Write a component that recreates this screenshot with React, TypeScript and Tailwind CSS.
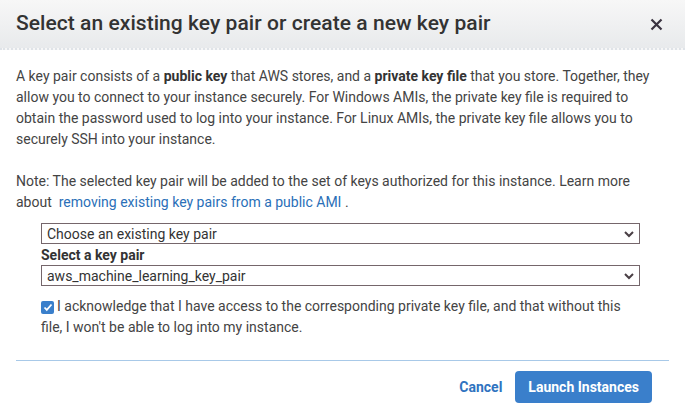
import React from "react";

const Chevron = () => (
  <svg width="12" height="8" viewBox="0 0 12 8" className="shrink-0">
    <path d="M2 2l4 4 4-4" fill="none" stroke="#4a3f45" strokeWidth="2" />
  </svg>
);

const Select = ({ value }: { value: string }) => (
  <div className="flex h-[21px] items-center justify-between border border-[#75666b] bg-white pl-[5px] pr-[4px] text-[14px] leading-none text-[#333]">
    <span>{value}</span>
    <Chevron />
  </div>
);

const App = () => {
  return (
    <div className="h-[415px] w-[685px] bg-white font-['Roboto',sans-serif] text-[#444]">
      {/* header */}
      <div className="flex h-[50px] items-center justify-between border-b-2 border-dotted border-[#dfe3e8] bg-gradient-to-b from-[#f7f7f7] to-[#e8eaec] pl-[16px] pr-[22px]">
        <h1 className="text-[21px] font-medium tracking-[0.05px] text-[#333]">
          Select an existing key pair or create a new key pair
        </h1>
        <svg width="13" height="13" viewBox="0 0 13 13">
          <path d="M1.5 1.5l10 10M11.5 1.5l-10 10" stroke="#3a3340" strokeWidth="2.2" />
        </svg>
      </div>

      <div className="px-[16px] pt-[16px] text-[14px] leading-[21px]">
        <p>
          A key pair consists of a <b className="font-bold text-[#333]">public key</b> that AWS stores, and a{" "}
          <b className="font-bold text-[#333]">private key file</b> that you store. Together, they allow you to
          connect to your instance securely. For Windows AMIs, the private key file is required to obtain the
          password used to log into your instance. For Linux AMIs, the private key file allows you to securely SSH
          into your instance.
        </p>
        <p className="mt-[21px]">
          Note: The selected key pair will be added to the set of keys authorized for this instance. Learn more
          about <span className="text-[#2a6fb8]">&nbsp;removing existing key pairs from a public AMI</span> .
        </p>

        <div className="ml-[25px] mr-[29px] mt-[10px] flex flex-col">
          <Select value="Choose an existing key pair" />
          <div className="mt-[1px] text-[14px] font-bold leading-[20px] text-[#333]">Select a key pair</div>
          <Select value="aws_machine_learning_key_pair" />
          <label className="mt-[10px] block">
            <span className="mr-[3px] inline-flex h-[13px] w-[13px] translate-y-[1px] items-center justify-center rounded-[2px] bg-[#3a7fcb] align-baseline">
              <svg width="10" height="9" viewBox="0 0 10 9">
                <path d="M1.5 4.5l2.3 2.4L8.5 1.5" fill="none" stroke="#fff" strokeWidth="1.8" />
              </svg>
            </span>
            I acknowledge that I have access to the corresponding private key file, and that without this file, I
            won't be able to log into my instance.
          </label>
        </div>

        <div className="mt-[22px] border-t border-[#a8c9e8]" />

        <div className="flex items-center justify-end gap-[13px] pr-[17px] pt-[10px]">
          <button className="text-[14px] font-bold text-[#2f73c0]">Cancel</button>
          <button className="h-[32px] rounded-[4px] bg-[#3a7fcb] px-[13px] text-[14px] font-bold text-white">
            Launch Instances
          </button>
        </div>
      </div>
    </div>
  );
};

export default App;
